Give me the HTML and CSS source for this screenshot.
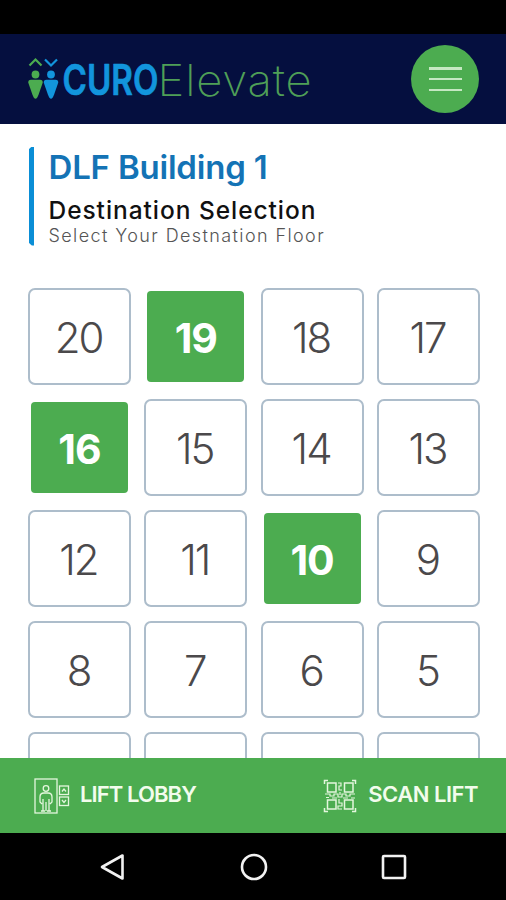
FILE: index.html
```
<!DOCTYPE html>
<html lang="en">
<head>
<meta charset="utf-8">
<title>CURO Elevate</title>
<link rel="stylesheet" href="styles.css">
</head>
<body>
<div class="phone">
  <div class="status"></div>
  <header class="header">
    <svg class="logo" width="290" height="50" viewBox="24 54 290 50" role="img" aria-label="CURO Elevate">
      <g fill="none" stroke-width="2.2">
        <path class="green-line" d="M29.500 65.500l6-6 6 6"/>
        <path class="blue-line" d="M45 59.500l6 6 6-6"/>
      </g>
      <g class="green"><circle cx="35.500" cy="74.500" r="3.900"/><path d="M31 79.700h9q3 0 2.700 3l-4 11.500q-3.200 9-6.400 0l-4-11.500q-.3-3 2.700-3z"/></g>
      <g class="blue"><circle cx="51" cy="74.500" r="3.900"/><path d="M46.500 79.700h9q3 0 2.700 3l-4 11.500q-3.200 9-6.400 0l-4-11.500q-.3-3 2.700-3z"/></g>
      <text class="curo" transform="translate(62.500 95) scale(.78 1)">CURO</text>
      <text class="elevate" transform="translate(157.600 95.500) scale(1.055 1)">Elevate</text>
    </svg>
    <button class="menu" aria-label="Menu"><span class="thick"></span><span></span><span></span></button>
  </header>
  <main class="main">
    <section class="intro">
      <h1>DLF Building 1</h1>
      <h2>Destination Selection</h2>
      <p>Select Your Destnation Floor</p>
    </section>
    <div class="floors">
      <div class="floor">20</div><div class="floor active">19</div><div class="floor">18</div><div class="floor">17</div>
      <div class="floor active">16</div><div class="floor">15</div><div class="floor">14</div><div class="floor">13</div>
      <div class="floor">12</div><div class="floor">11</div><div class="floor active">10</div><div class="floor">9</div>
      <div class="floor">8</div><div class="floor">7</div><div class="floor">6</div><div class="floor">5</div>
      <div class="floor"></div><div class="floor"></div><div class="floor"></div><div class="floor"></div>
    </div>
  </main>
  <footer class="footer">
    <div class="action">
      <svg width="36" height="36" viewBox="0 0 36 36" fill="none" stroke="#e4f6dd" stroke-width="1.300">
        <rect x="1" y="1" width="22" height="34"/>
        <circle cx="12" cy="10.500" r="2.800"/>
        <path d="M9 33V21M15 33V21M12 24v9M8 26l-2-2v-5q0-4 4-4h4q4 0 4 4v5l-2 2M7 33h4M13 33h4"/>
        <rect x="25.500" y="8" width="9" height="8.500"/><rect x="25.500" y="19" width="9" height="8.500"/>
        <path d="M28 13.500l2-2.500 2 2.500M28 22l2 2.500 2-2.500"/>
      </svg>
      <span class="lobby">LIFT LOBBY</span>
    </div>
    <div class="action">
      <svg width="34" height="34" viewBox="0 0 34 34" fill="none" stroke="#e4f6dd" stroke-width="1.500">
        <path d="M1.500 5V1.500H5M29 1.500h3.500V5M1.500 29v3.500H5M29 32.500h3.500V29"/>
        <rect x="4.500" y="4" width="8.500" height="9"/><rect x="21.500" y="4" width="8.500" height="9"/>
        <rect x="4.500" y="21" width="8.500" height="9"/><rect x="21.500" y="21" width="8.500" height="9"/>
        <path d="M15 4h3v3h-2v4h3M2 15h5v2h4v-2h4v3h4v-3h4v2h4v-2h5M3 18.500h3M9 19h5M16 20v4h3v3h-4v3h4M20 19h5M28 19h4M17 13v3" stroke-width="1.200"/>
      </svg>
      <span class="scan">SCAN LIFT</span>
    </div>
  </footer>
  <nav class="nav">
    <svg width="28" height="30" viewBox="0 0 28 30"><path d="M3 15L23.500 3.500v23z"/></svg>
    <svg width="30" height="30" viewBox="0 0 30 30"><circle cx="15" cy="15" r="12"/></svg>
    <svg width="28" height="30" viewBox="0 0 28 30"><rect x="3" y="4" width="22" height="22" rx="1"/></svg>
  </nav>
</div>
</body>
</html>
```

FILE: styles.css
```
* { box-sizing: border-box; }
body { margin: 0; background: #000; font-family: Inter, "Liberation Sans", sans-serif; }
.phone { width: 506px; height: 900px; display: flex; flex-direction: column; overflow: hidden; }
.status { height: 34px; background: #000; }
.header { height: 89.500px; flex: none; background: #050f3f; display: flex; justify-content: space-between; align-items: flex-start; padding: 11px 27px 0 24px; }
.logo { margin-top: 9px; }
.green { fill: #4cac50; }
.blue { fill: #1295dd; }
.green-line { stroke: #4cac50; }
.blue-line { stroke: #1295dd; }
.curo { font: 600 42.500px Inter, sans-serif; fill: #1295dd; stroke: #1295dd; stroke-width: .7; stroke-linejoin: round; }
.elevate { font: 200 43px Inter, sans-serif; fill: #4f9f57; letter-spacing: .8px; }
.menu { width: 68px; height: 68px; padding: 0; border: 0; border-radius: 50%; background: #4cac50; display: flex; flex-direction: column; align-items: center; justify-content: center; gap: 8.500px; }
.menu span { width: 33px; height: 2px; background: #c5e8c2; }
.menu .thick { height: 2.500px; }
.main { height: 634.500px; flex: none; background: #fff; overflow: hidden; padding: 23px 26px 0 28px; }
.intro { height: 99px; padding-left: 20.500px; position: relative; }
.intro::before { content: ""; position: absolute; left: .5px; top: 0; width: 5.500px; height: 99px; background: #0a8ed6; clip-path: polygon(0 3px, 60% 0, 100% 0, 100% 100%, 60% 100%, 0 96px); }
h1, h2, p { margin: 0; white-space: nowrap; }
h1 { font-size: 33px; line-height: 40px; font-weight: 600; color: #1473b5; letter-spacing: -.2px; }
h2 { font-size: 24.500px; line-height: 30px; font-weight: 500; color: #111; margin-top: 8px; letter-spacing: .95px; }
p { font-size: 18px; line-height: 22px; font-weight: 300; color: #555; letter-spacing: 1.400px; }
.floors { display: grid; grid-template-columns: repeat(4, 103px); grid-auto-rows: 97px; column-gap: 13.300px; row-gap: 14px; margin-top: 42px; }
.floor { border: 2px solid #adbdcb; border-radius: 7px; display: flex; align-items: center; justify-content: center; font-size: 42px; font-weight: 300; color: #4b494b; letter-spacing: -2px; padding: 2px 2px 0 0; }
.active { margin: 3px; border: 0; border-radius: 4px; background: #4cac50; color: #fff; font-size: 41px; font-weight: 700; letter-spacing: -1px; padding: 3px 0 0 0; }
.footer { height: 75px; flex: none; background: #4cac50; color: #f2fced; display: flex; justify-content: space-between; align-items: center; padding: 0 28px 0 34px; }
.action { display: flex; align-items: center; gap: 11px; font-size: 22px; font-weight: 600; letter-spacing: -.5px; white-space: nowrap; }
.action span { padding-bottom: 4px; }
.lobby { letter-spacing: -.9px; margin-left: -1px; }
.nav { height: 67px; flex: none; display: flex; justify-content: space-between; align-items: center; padding: 0 98px 0 99px; }
.nav svg { fill: none; stroke: #f2f2f2; stroke-width: 2.600; stroke-linejoin: round; }
```
